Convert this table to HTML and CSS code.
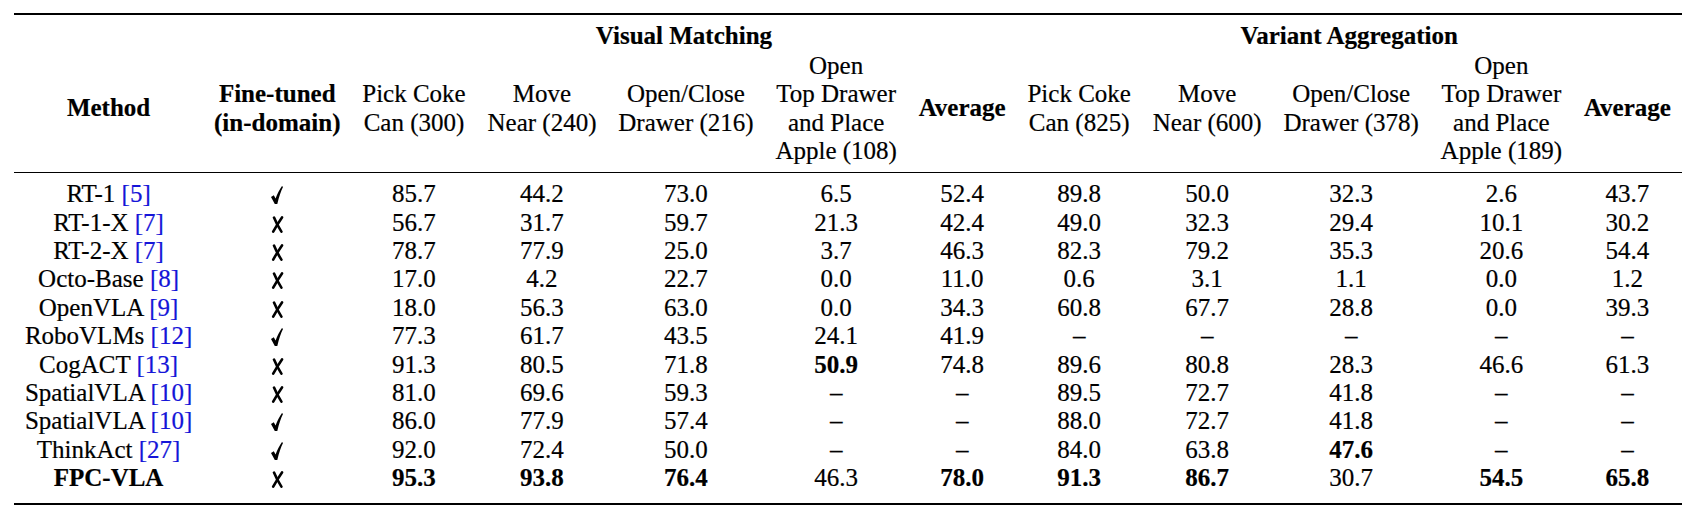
FILE: index.html
```html
<!DOCTYPE html>
<html>
<head>
<meta charset="utf-8">
<link rel="stylesheet" href="styles.css">
</head>
<body>
<table class="tbl">
<thead>
<tr class="row-grp">
<th></th><th></th>
<th colspan="5" class="b">Visual Matching</th>
<th colspan="5" class="b">Variant Aggregation</th>
</tr>
<tr class="row-head">
<th class="b">Method</th>
<th class="b">Fine-tuned<br>(in-domain)</th>
<th>Pick Coke<br>Can (300)</th>
<th>Move<br>Near (240)</th>
<th>Open/Close<br>Drawer (216)</th>
<th>Open<br>Top Drawer<br>and Place<br>Apple (108)</th>
<th class="b">Average</th>
<th>Pick Coke<br>Can (825)</th>
<th>Move<br>Near (600)</th>
<th>Open/Close<br>Drawer (378)</th>
<th>Open<br>Top Drawer<br>and Place<br>Apple (189)</th>
<th class="b">Average</th>
</tr>
</thead>
<tbody>
<tr><td>RT-1 <span class="ref">[5]</span></td><td><svg class="ck" viewBox="0 0 12 18"><path d="M0 11 L2.8 9.3 L4.6 12.6 C6.3 7.8 8.6 3.5 11 0 L12 0.9 C10 4.8 8 10.4 6.3 17.9 L3.8 17.9 Z"/></svg></td><td>85.7</td><td>44.2</td><td>73.0</td><td>6.5</td><td>52.4</td><td>89.8</td><td>50.0</td><td>32.3</td><td>2.6</td><td>43.7</td></tr>
<tr><td>RT-1-X <span class="ref">[7]</span></td><td><svg class="xm" viewBox="0 0 13 17"><path d="M3 1.6 Q5.8 8.6 10.4 15.6"/><path d="M11 1.4 Q6.8 7.4 2.2 15.6"/></svg></td><td>56.7</td><td>31.7</td><td>59.7</td><td>21.3</td><td>42.4</td><td>49.0</td><td>32.3</td><td>29.4</td><td>10.1</td><td>30.2</td></tr>
<tr><td>RT-2-X <span class="ref">[7]</span></td><td><svg class="xm" viewBox="0 0 13 17"><path d="M3 1.6 Q5.8 8.6 10.4 15.6"/><path d="M11 1.4 Q6.8 7.4 2.2 15.6"/></svg></td><td>78.7</td><td>77.9</td><td>25.0</td><td>3.7</td><td>46.3</td><td>82.3</td><td>79.2</td><td>35.3</td><td>20.6</td><td>54.4</td></tr>
<tr><td>Octo-Base <span class="ref">[8]</span></td><td><svg class="xm" viewBox="0 0 13 17"><path d="M3 1.6 Q5.8 8.6 10.4 15.6"/><path d="M11 1.4 Q6.8 7.4 2.2 15.6"/></svg></td><td>17.0</td><td>4.2</td><td>22.7</td><td>0.0</td><td>11.0</td><td>0.6</td><td>3.1</td><td>1.1</td><td>0.0</td><td>1.2</td></tr>
<tr><td>OpenVLA <span class="ref">[9]</span></td><td><svg class="xm" viewBox="0 0 13 17"><path d="M3 1.6 Q5.8 8.6 10.4 15.6"/><path d="M11 1.4 Q6.8 7.4 2.2 15.6"/></svg></td><td>18.0</td><td>56.3</td><td>63.0</td><td>0.0</td><td>34.3</td><td>60.8</td><td>67.7</td><td>28.8</td><td>0.0</td><td>39.3</td></tr>
<tr><td>RoboVLMs <span class="ref">[12]</span></td><td><svg class="ck" viewBox="0 0 12 18"><path d="M0 11 L2.8 9.3 L4.6 12.6 C6.3 7.8 8.6 3.5 11 0 L12 0.9 C10 4.8 8 10.4 6.3 17.9 L3.8 17.9 Z"/></svg></td><td>77.3</td><td>61.7</td><td>43.5</td><td>24.1</td><td>41.9</td><td>–</td><td>–</td><td>–</td><td>–</td><td>–</td></tr>
<tr><td>CogACT <span class="ref">[13]</span></td><td><svg class="xm" viewBox="0 0 13 17"><path d="M3 1.6 Q5.8 8.6 10.4 15.6"/><path d="M11 1.4 Q6.8 7.4 2.2 15.6"/></svg></td><td>91.3</td><td>80.5</td><td>71.8</td><td class="b">50.9</td><td>74.8</td><td>89.6</td><td>80.8</td><td>28.3</td><td>46.6</td><td>61.3</td></tr>
<tr><td>SpatialVLA <span class="ref">[10]</span></td><td><svg class="xm" viewBox="0 0 13 17"><path d="M3 1.6 Q5.8 8.6 10.4 15.6"/><path d="M11 1.4 Q6.8 7.4 2.2 15.6"/></svg></td><td>81.0</td><td>69.6</td><td>59.3</td><td>–</td><td>–</td><td>89.5</td><td>72.7</td><td>41.8</td><td>–</td><td>–</td></tr>
<tr><td>SpatialVLA <span class="ref">[10]</span></td><td><svg class="ck" viewBox="0 0 12 18"><path d="M0 11 L2.8 9.3 L4.6 12.6 C6.3 7.8 8.6 3.5 11 0 L12 0.9 C10 4.8 8 10.4 6.3 17.9 L3.8 17.9 Z"/></svg></td><td>86.0</td><td>77.9</td><td>57.4</td><td>–</td><td>–</td><td>88.0</td><td>72.7</td><td>41.8</td><td>–</td><td>–</td></tr>
<tr><td>ThinkAct <span class="ref">[27]</span></td><td><svg class="ck" viewBox="0 0 12 18"><path d="M0 11 L2.8 9.3 L4.6 12.6 C6.3 7.8 8.6 3.5 11 0 L12 0.9 C10 4.8 8 10.4 6.3 17.9 L3.8 17.9 Z"/></svg></td><td>92.0</td><td>72.4</td><td>50.0</td><td>–</td><td>–</td><td>84.0</td><td>63.8</td><td class="b">47.6</td><td>–</td><td>–</td></tr>
<tr class="last"><td class="b">FPC-VLA</td><td><svg class="xm" viewBox="0 0 13 17"><path d="M3 1.6 Q5.8 8.6 10.4 15.6"/><path d="M11 1.4 Q6.8 7.4 2.2 15.6"/></svg></td><td class="b">95.3</td><td class="b">93.8</td><td class="b">76.4</td><td>46.3</td><td class="b">78.0</td><td class="b">91.3</td><td class="b">86.7</td><td>30.7</td><td class="b">54.5</td><td class="b">65.8</td></tr>
</tbody>
</table>
</body>
</html>
```

FILE: styles.css
```css
html, body {
  margin: 0;
  padding: 0;
  background: #ffffff;
}
body {
  padding: 13px 0 0 14px;
  font-family: "Liberation Serif", "Times New Roman", serif;
  color: #000;
}
.tbl {
  border-collapse: collapse;
  font-family: "Liberation Serif", "Times New Roman", serif;
  font-size: 25px;
  line-height: 28.4px;
  border-top: 2px solid #000;
  border-bottom: 2.4px solid #000;
  -webkit-text-stroke: 0.2px currentColor;
}
.tbl th, .tbl td {
  padding: 0 10.9px;
  text-align: center;
  white-space: nowrap;
  font-weight: normal;
  vertical-align: middle;
}
.tbl .b {
  font-weight: bold;
}
.row-grp th {
  padding-top: 6.8px;
}
.row-head th {
  padding-top: 1.6px;
  padding-bottom: 7px;
  border-bottom: 1.3px solid #000;
}
.tbl tbody tr:first-child td {
  padding-top: 6.7px;
}
.tbl tbody tr.last td {
  padding-bottom: 10px;
}
.ref {
  color: #1515d8;
}
.ck {
  width: 12px;
  height: 18px;
  vertical-align: -2px;
  fill: #000;
}
.xm {
  width: 13px;
  height: 17px;
  vertical-align: -2px;
  fill: none;
  stroke: #000;
  stroke-width: 2.6;
  stroke-linecap: round;
}
```
